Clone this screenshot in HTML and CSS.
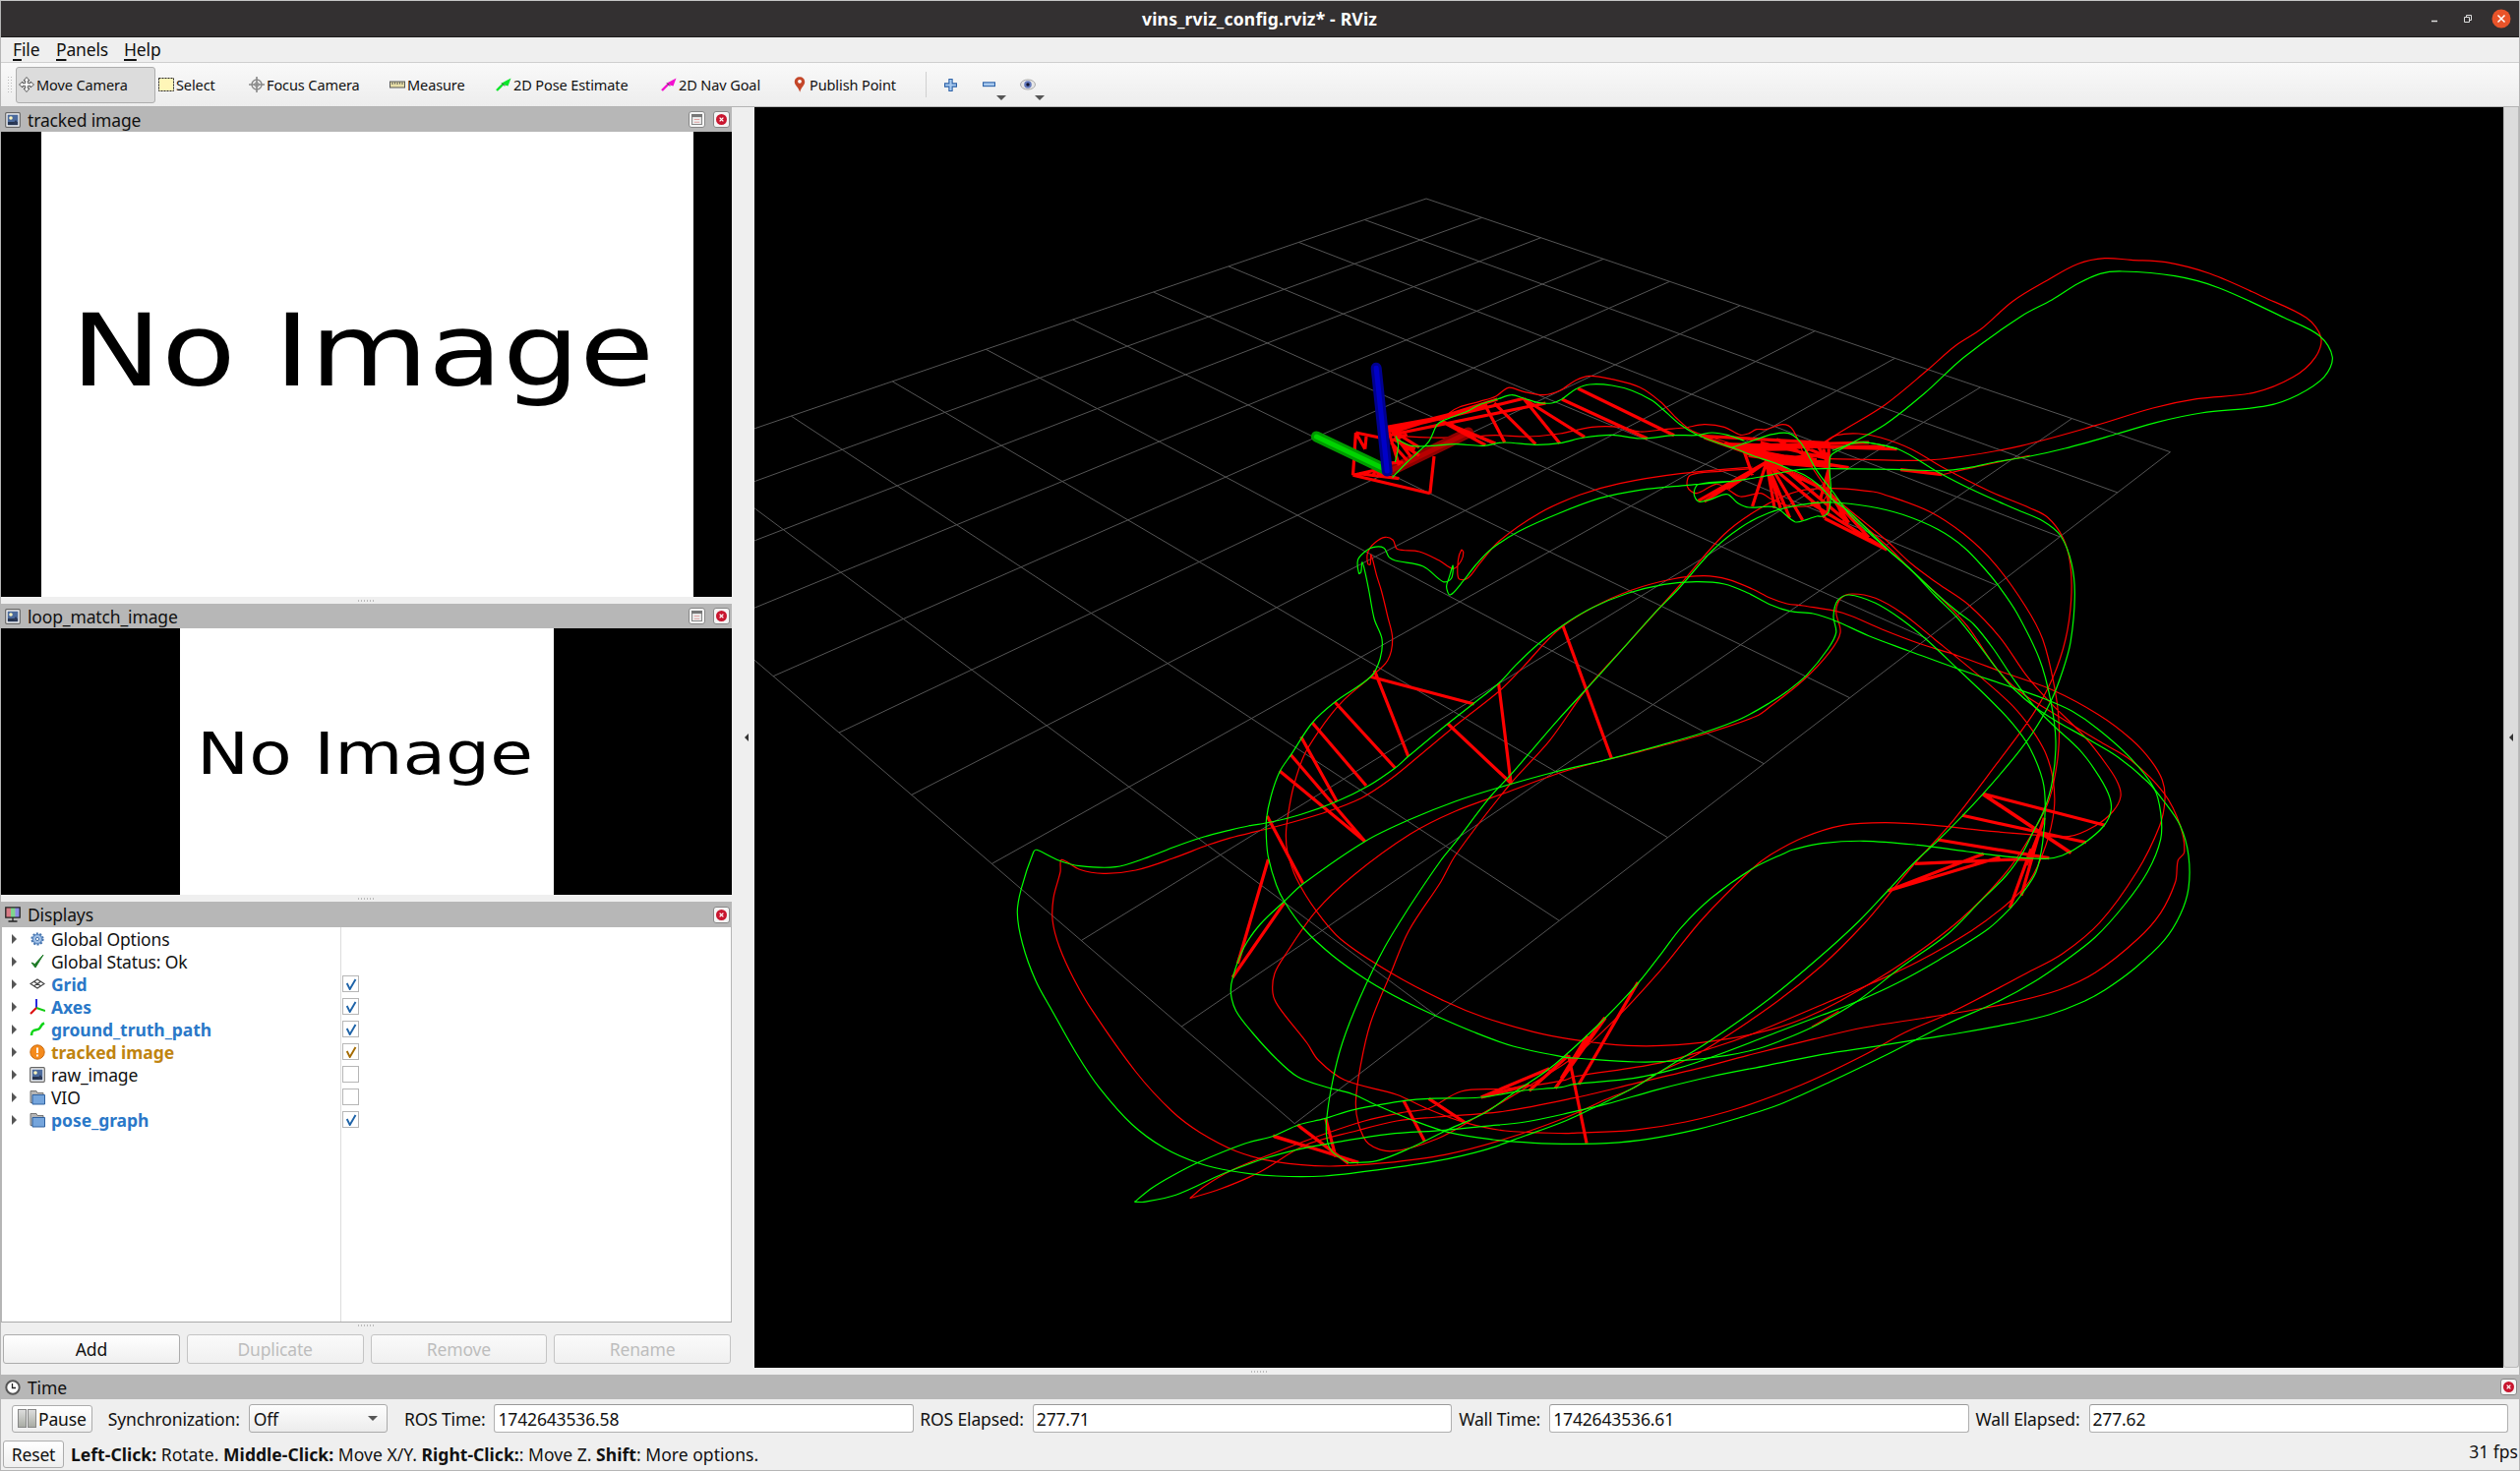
FILE: index.html
```html
<!DOCTYPE html>
<html lang="en">
<head>
<meta charset="utf-8">
<title>vins_rviz_config.rviz* - RViz</title>
<link rel="stylesheet" href="styles.css">
</head>
<body>
<svg class="defs" aria-hidden="true">
  <defs>
    <symbol id="i-move" viewBox="0 0 16 16"><path d="M8 .5 11 4H9.300v2.700H12V5l3.500 3-3.500 3V9.300H9.300V12H11l-3 3.500L5 12h1.700V9.300H4V11L.5 8 4 5v1.700h2.700V4H5z" fill="#fff" stroke="#333" stroke-width=".8"/></symbol>
    <symbol id="i-select" viewBox="0 0 16 14"><rect x=".5" y=".5" width="15" height="13" fill="#fff6b8" stroke="#222" stroke-dasharray="2 1"/></symbol>
    <symbol id="i-focus" viewBox="0 0 16 16"><g fill="none" stroke="#888"><circle cx="8" cy="8" r="5" stroke-width="1.400"/><circle cx="8" cy="8" r="2.300"/><path d="M8 0v16M0 8h16" stroke-width="1.600"/></g></symbol>
    <symbol id="i-measure" viewBox="0 0 16 7"><rect x=".5" y=".5" width="15" height="6" fill="#e9dfa8" stroke="#555"/><path d="M3 1v2.500M5.500 1v2M8 1v2.500M10.500 1v2M13 1v2.500" stroke="#555"/></symbol>
    <symbol id="i-arrow" viewBox="0 0 16 14"><path d="M1 13 7 7" stroke="currentColor" stroke-width="2.400"/><path d="M15.500 .5 12.500 8.500 7 7 6 5.500z" fill="currentColor"/><path d="M6 5.500 9 8.500" stroke="#333"/></symbol>
    <symbol id="i-pin" viewBox="0 0 12 16"><path d="M6 .3c3 0 5.200 2 5.200 5 0 3.500-3.700 5.400-5 10.400C5 10.700.8 8.800.8 5.300c0-3 2.200-5 5.200-5z" fill="#c4472a"/><circle cx="6" cy="4.800" r="1.900" fill="#fff"/></symbol>
    <symbol id="i-plus" viewBox="0 0 12 12"><path d="M4.500.5h3v4h4v3h-4v4h-3v-4h-4v-3h4z" fill="#a9cbf0" stroke="#2d62a8"/></symbol>
    <symbol id="i-minus" viewBox="0 0 12 5"><rect x=".5" y=".5" width="11" height="3.500" fill="#a9cbf0" stroke="#2d62a8"/></symbol>
    <symbol id="i-eye" viewBox="0 0 16 12"><ellipse cx="8" cy="6" rx="7.500" ry="5" fill="#e6e6e6" stroke="#aaa"/><circle cx="8" cy="6" r="3.800" fill="#6379bd"/><circle cx="8" cy="6" r="1.700" fill="#10142e"/></symbol>
    <symbol id="i-image" viewBox="0 0 16 16"><rect x=".7" y=".7" width="14.600" height="14.600" rx="1" fill="#f3f3f3" stroke="#666" stroke-width="1.200"/><rect x="2.700" y="2.700" width="10.600" height="10.600" fill="#4b6a9c"/><path d="M3 10h10v3H3z" fill="#26344f"/><circle cx="6" cy="6" r="1.800" fill="#fff7c0"/><path d="m8 12 3-4 2 3v2z" fill="#2c3a58"/></symbol>
    <symbol id="i-monitor" viewBox="0 0 16 16"><path d="M1 1h5v10H1z" fill="#d77b85"/><path d="M6 1h4.500v10H6z" fill="#7fd48d"/><path d="M10.500 1H15v10h-4.500z" fill="#8a8be6"/><path d="M.8.8h14.400v10.400H.8zM8 11v3.500M3.500 15h9" fill="none" stroke="#222" stroke-width="1.300"/></symbol>
    <symbol id="i-clock" viewBox="0 0 16 16"><circle cx="8" cy="8" r="6.700" fill="#fff" stroke="#555" stroke-width="2"/><path d="M7.500 4v4.500H11" fill="none" stroke="#222" stroke-width="1.300"/></symbol>
    <symbol id="i-gear" viewBox="0 0 16 16"><circle cx="8" cy="8" r="5.500" fill="#8fb2dd" stroke="#4674ae" stroke-width="2.200" stroke-dasharray="1.900 1.550"/><circle cx="8" cy="8" r="4.500" fill="#a3c1e6" stroke="#5d8ac2"/><circle cx="8" cy="8" r="1.600" fill="#fff" stroke="#4674ae"/></symbol>
    <symbol id="i-ok" viewBox="0 0 16 16"><path d="m2 9 4 5 8-13-8.500 9.500z" fill="#1d7a26" stroke="#1d7a26"/></symbol>
    <symbol id="i-grid" viewBox="0 0 16 16"><path d="m8 3 7 4.500L8 12 1 7.500zM4.500 5.200l7 4.600M11.500 5.200l-7 4.600" fill="none" stroke="#444" stroke-width="1.200"/></symbol>
    <symbol id="i-axes" viewBox="0 0 16 16"><path d="M7 9V0" stroke="#11d" stroke-width="1.800"/><path d="m7 9 9 3" stroke="#1c1" stroke-width="2"/><path d="m7 9-6 6" stroke="#d11" stroke-width="2.200"/></symbol>
    <symbol id="i-path" viewBox="0 0 16 16"><path d="M2 14C2 7 7 9 9.500 7.500 12 6 11 3 15 1.500" fill="none" stroke="#0cd416" stroke-width="2.600"/></symbol>
    <symbol id="i-warn" viewBox="0 0 16 16"><circle cx="8" cy="8" r="7.200" fill="#f58a1c" stroke="#c96a10"/><path d="M8 3.500v5.500M8 10.500v2" stroke="#fff" stroke-width="2"/></symbol>
    <symbol id="i-folder" viewBox="0 0 16 16"><path d="M1 1.500h6l1 2h6v10H1z" fill="#b5b5b5" stroke="#777"/><path d="M3 5.500h12.500V15H3z" fill="#75a5dc" stroke="#2f619f"/></symbol>
    <symbol id="i-close" viewBox="0 0 10 10"><circle cx="5" cy="5" r="5" fill="#c9162f"/><path d="m3.300 3.300 3.400 3.400M6.700 3.300 3.300 6.700" stroke="#fff" stroke-width="1.200"/></symbol>
    <symbol id="i-float" viewBox="0 0 10 10"><path d="M.5.500h9v9h-9z" fill="#eee" stroke="#888"/><path d="M0 0h10v2.800H0z" fill="#777"/><path d="M2.500 5h5M2.500 7.500h5" stroke="#e0a0a0"/></symbol>
    <symbol id="i-check" viewBox="0 0 12 12"><path d="m1.700 5 3 6 5.800-10" fill="none" stroke="currentColor" stroke-width="1.900"/></symbol>
  </defs>
</svg>
<div class="window">
  <header class="titlebar">
    <span class="title">vins_rviz_config.rviz* - RViz</span>
    <div class="controls">
      <svg width="12" height="12"><path d="M3 8.500h6" stroke="#ddd" stroke-width="1.500"/></svg>
      <svg width="12" height="12"><path d="M2.500 4.500h5v5h-5zM4.500 4V2.500h5v5H8" fill="none" stroke="#ddd"/></svg>
      <svg width="20" height="20"><circle cx="10" cy="10" r="9.500" fill="#e9542a"/><path d="m6.500 6.500 7 7M13.500 6.500l-7 7" stroke="#fff" stroke-width="1.500"/></svg>
    </div>
  </header>
  <nav class="menubar"><span class="m1"><u>F</u>ile</span><span class="m2"><u>P</u>anels</span><span class="m3"><u>H</u>elp</span></nav>
  <div class="toolbar">
    <i class="grip"></i>
    <div class="tool active w-move"><svg class="ic"><use href="#i-move"/></svg>Move Camera</div>
    <div class="tool w-select"><svg class="ic"><use href="#i-select"/></svg>Select</div>
    <div class="tool w-focus"><svg class="ic"><use href="#i-focus"/></svg>Focus Camera</div>
    <div class="tool w-measure"><svg class="ic"><use href="#i-measure"/></svg>Measure</div>
    <div class="tool w-pose"><svg class="ic lime"><use href="#i-arrow"/></svg>2D Pose Estimate</div>
    <div class="tool w-nav"><svg class="ic pink"><use href="#i-arrow"/></svg>2D Nav Goal</div>
    <div class="tool w-point"><svg class="ic"><use href="#i-pin"/></svg>Publish Point</div>
    <i class="vsep"></i>
    <div class="mini"><svg width="13" height="13"><use href="#i-plus"/></svg></div>
    <div class="mini"><svg width="13" height="6"><use href="#i-minus"/></svg><i class="drop"></i></div>
    <div class="mini"><svg width="16" height="12"><use href="#i-eye"/></svg><i class="drop"></i></div>
  </div>
  <main class="work">
    <aside class="docks">
      <section class="dock">
        <h2 class="dock-title"><svg class="ic"><use href="#i-image"/></svg><span>tracked image</span><b class="tb"><svg><use href="#i-float"/></svg></b><b class="tb"><svg><use href="#i-close"/></svg></b></h2>
        <div class="camera cam-a"><svg width="663" height="473"><rect width="663" height="473" fill="#fff"/><text x="30" y="258" font-size="102" textLength="593" lengthAdjust="spacingAndGlyphs">No Image</text></svg></div>
      </section>
      <div class="split"><i class="dots"></i></div>
      <section class="dock">
        <h2 class="dock-title"><svg class="ic"><use href="#i-image"/></svg><span>loop_match_image</span><b class="tb"><svg><use href="#i-float"/></svg></b><b class="tb"><svg><use href="#i-close"/></svg></b></h2>
        <div class="camera cam-b"><svg width="380" height="271"><rect width="380" height="271" fill="#fff"/><text x="17" y="148" font-size="58" textLength="342" lengthAdjust="spacingAndGlyphs">No Image</text></svg></div>
      </section>
      <div class="split"><i class="dots"></i></div>
      <section class="dock">
        <h2 class="dock-title tall"><svg class="ic"><use href="#i-monitor"/></svg><span>Displays</span><b class="tb"><svg><use href="#i-close"/></svg></b></h2>
        <ul class="tree">
          <li><i class="exp"></i><svg class="ic"><use href="#i-gear"/></svg><span>Global Options</span></li>
          <li><i class="exp"></i><svg class="ic"><use href="#i-ok"/></svg><span>Global Status: Ok</span></li>
          <li class="on"><i class="exp"></i><svg class="ic"><use href="#i-grid"/></svg><span>Grid</span><b class="cb"><svg><use href="#i-check"/></svg></b></li>
          <li class="on"><i class="exp"></i><svg class="ic"><use href="#i-axes"/></svg><span>Axes</span><b class="cb"><svg><use href="#i-check"/></svg></b></li>
          <li class="on"><i class="exp"></i><svg class="ic"><use href="#i-path"/></svg><span>ground_truth_path</span><b class="cb"><svg><use href="#i-check"/></svg></b></li>
          <li class="on warn"><i class="exp"></i><svg class="ic"><use href="#i-warn"/></svg><span>tracked image</span><b class="cb"><svg><use href="#i-check"/></svg></b></li>
          <li><i class="exp"></i><svg class="ic"><use href="#i-image"/></svg><span>raw_image</span><b class="cb"></b></li>
          <li><i class="exp"></i><svg class="ic"><use href="#i-folder"/></svg><span>VIO</span><b class="cb"></b></li>
          <li class="on"><i class="exp"></i><svg class="ic"><use href="#i-folder"/></svg><span>pose_graph</span><b class="cb"><svg><use href="#i-check"/></svg></b></li>
        </ul>
        <div class="split thin"><i class="dots"></i></div>
        <div class="actions"><button>Add</button><button disabled>Duplicate</button><button disabled>Remove</button><button disabled>Rename</button></div>
      </section>
    </aside>
    <div class="collapse left"><i></i></div>
    <svg class="scene" id="scene" width="1778" height="1282" viewBox="767 109 1778 1282"></svg>
    <div class="collapse right"><i></i></div>
  </main>
  <div class="split wide"><i class="dots"></i></div>
  <h2 class="dock-title time-title"><svg class="ic"><use href="#i-clock"/></svg><span>Time</span><b class="tb"><svg><use href="#i-close"/></svg></b></h2>
  <div class="timebar">
    <button class="pause"><i></i><i></i>Pause</button>
    <label class="l-sync">Synchronization:</label><div class="combo">Off<i class="drop"></i></div>
    <label class="l-ros">ROS Time:</label><div class="field">1742643536.58</div>
    <label class="l-rel">ROS Elapsed:</label><div class="field">277.71</div>
    <label class="l-wall">Wall Time:</label><div class="field">1742643536.61</div>
    <label class="l-wel">Wall Elapsed:</label><div class="field">277.62</div>
  </div>
  <footer class="status"><button class="reset">Reset</button><p><b>Left-Click:</b> Rotate. <b>Middle-Click:</b> Move X/Y. <b>Right-Click:</b>: Move Z. <b>Shift</b>: More options.</p><span class="fps">31 fps</span></footer>
</div>
<script src="scene.js"></script>
</body>
</html>
```
FILE: styles.css
```css
* { box-sizing: border-box; }
body { margin: 0; background: #efefef; font-family: "Noto Sans", "Open Sans", sans-serif; font-size: 17.5px; letter-spacing: -0.15px; color: #111; }
.defs { position: absolute; width: 0; height: 0; }
i { font-style: normal; }
button { font: inherit; letter-spacing: inherit; color: inherit; padding: 0; }
.window { width: 2562px; height: 1496px; display: flex; flex-direction: column; border-left: 1px solid #b5b5b5; border-right: 1px solid #b5b5b5; border-top: 1px solid #c6c6c6; border-bottom: 1px solid #b5b5b5; overflow: hidden; white-space: nowrap; }
.titlebar { flex: none; height: 37px; background: #333031; border-bottom: 1px solid #1c1b1b; display: flex; align-items: center; padding-left: 1160px; color: #fff; font-weight: 700; font-size: 17.5px; letter-spacing: 0.2px; }
.title { flex: 1; }
.controls { display: flex; align-items: center; gap: 22px; padding-right: 8px; }
.controls svg:last-child { margin-left: -4px; }
.menubar { flex: none; height: 26px; border-bottom: 1px solid #cfcfcf; display: flex; align-items: center; padding: 0 0 2px 12px; }
.menubar u { text-decoration-thickness: 2px; text-underline-offset: 3px; }
.m1 { width: 44px; } .m2 { width: 69px; } .m3 { width: 60px; }
.toolbar { flex: none; height: 45px; background: linear-gradient(#f9f9f9, #ededed); border-bottom: 1px solid #b4b4b4; display: flex; align-items: center; font-size: 14.5px; letter-spacing: -0.1px; }
.grip { width: 5px; height: 18px; margin: 0 4px 0 6px; background: radial-gradient(circle, #bbb 0.8px, transparent 1px) 0 0 / 3px 3px; }
.tool { display: flex; align-items: center; gap: 2px; height: 37px; padding-left: 3px; }
.tool .ic { width: 16px; height: 16px; flex: none; }
.active { background: #dcdcdc; border: 1px solid #adadad; border-radius: 3px; padding-left: 2px; }
.w-move { width: 142px; } .w-select { width: 92px; } .w-focus { width: 143px; } .w-measure { width: 108px; } .w-pose { width: 168px; } .w-nav { width: 133px; } .w-point { width: 139px; }
.lime { color: #0ee52c; } .pink { color: #f310cf; }
.vsep { width: 1px; height: 26px; background: #d0d0d0; }
.mini { width: 39px; height: 37px; display: flex; align-items: center; justify-content: center; position: relative; left: 5px; }
.drop { border: 5px solid transparent; border-top-color: #555; border-bottom: 0; }
.mini .drop { position: absolute; left: 27px; bottom: 3px; }
.work { flex: none; height: 1282px; display: flex; }
.docks { flex: none; width: 743px; display: flex; flex-direction: column; }
.dock-title { flex: none; margin: 0; height: 25px; background: #b7b7b7; display: flex; align-items: center; font-size: 17.5px; font-weight: 400; padding: 0 2px 0 4px; gap: 7px; }
.dock-title.tall { height: 26px; }
.dock-title .ic { width: 16px; height: 16px; }
.dock-title span { flex: 1; }
.tb { width: 17px; height: 17px; background: #f5f5f5; border: 1px solid #888; border-radius: 3px; display: flex; align-items: center; justify-content: center; }
.tb + .tb { margin-left: 1px; }
.tb svg { width: 11px; height: 11px; }
.camera { background: #000; display: flex; }
.camera svg { display: block; font-family: "DejaVu Sans", sans-serif; letter-spacing: 0; }
.cam-a { height: 473px; padding-left: 41px; }
.cam-b { height: 271px; padding-left: 182px; }
.split { flex: none; height: 7px; display: flex; align-items: center; justify-content: center; }
.split.thin { height: 12px; align-items: flex-start; padding-top: 2px; }
.dots { width: 18px; height: 2px; background: repeating-linear-gradient(90deg, #bbb 0 1px, transparent 1px 3px); }
.tree { margin: 0; padding: 0; list-style: none; height: 402px; background: linear-gradient(90deg, #fff 344px, #dcdcdc 344px 345px, #fff 345px); border-left: 1px solid #b5b5b5; border-bottom: 1px solid #aaa; border-right: 1px solid #b5b5b5; }
.tree li { height: 23px; display: flex; align-items: center; }
.exp { border: 5px solid transparent; border-left-color: #555; border-right: 0; margin: 0 13px 0 10px; }
.tree .ic { width: 16px; height: 16px; flex: none; }
.tree span { width: 302px; padding-left: 6px; flex: none; }
.on { color: #2a78c8; }
.on span { font-weight: 700; font-size: 17.5px; letter-spacing: -0.05px; }
.warn { color: #c08410; }
.cb { width: 17px; height: 17px; background: #fff; border: 1px solid #b6b6b6; display: flex; align-items: center; justify-content: center; color: #1e63a8; }
.warn .cb { color: #a56b00; }
.cb svg { width: 12px; height: 12px; }
.actions { display: flex; gap: 7px; padding: 0 1px 0 2px; }
button { background: linear-gradient(#fff, #efefef); border: 1px solid #acacac; border-radius: 3px; }
.actions button { flex: 1; height: 30px; }
button:disabled { color: #bdbdbd; border-color: #c4c4c4; background: linear-gradient(#fafafa, #f0f0f0); }
.collapse { flex: none; display: flex; align-items: center; justify-content: center; }
.collapse.left { width: 23px; padding-left: 7px; }
.collapse.right { width: 16px; background: #dcdcdc; border: 1px solid #bbb; border-top: 0; border-radius: 0 0 3px 3px; }
.collapse i { border: 4px solid transparent; border-right-color: #333; border-left: 0; }
.scene { display: block; background: #000; flex: none; }
.timebar { flex: none; height: 39px; display: flex; align-items: center; padding: 0 11px; }
.timebar label { text-align: right; padding-right: 9px; }
.pause { width: 82px; height: 28px; display: flex; align-items: center; padding-left: 5px; gap: 1px; }
.pause i { width: 9px; height: 19px; background: linear-gradient(#ddd, #a9aca4); border: 1px solid #888; }
.pause i + i { margin-right: 1px; }
.l-sync { width: 159px; } .l-ros { width: 109px; } .l-rel { width: 121px; } .l-wall { width: 99px; } .l-wel { width: 122px; }
.combo { width: 141px; height: 29px; background: linear-gradient(#fdfdfd, #ececec); border: 1px solid #aaa; border-radius: 3px; display: flex; align-items: center; justify-content: space-between; padding: 0 9px 0 4px; }
.field { width: 427px; height: 29px; background: #fff; border: 1px solid #b0b0b0; border-top-color: #999; border-radius: 3px; display: flex; align-items: center; padding-left: 3px; }
.status { flex: 1; display: flex; align-items: center; padding: 2px 1px 1px 2px; }
.reset { width: 62px; height: 28px; }
.status p { margin: 0 0 0 7px; flex: 1; letter-spacing: 0.04px; }
.fps { padding-bottom: 6px; letter-spacing: 0; }
/* 3D view strokes */
.grid { stroke: #555; stroke-width: 1; fill: none; }
.est { stroke: #f00; stroke-width: 1.2; fill: none; }
.truth { stroke: #0f0; stroke-width: 1.2; fill: none; }
.loop { stroke: #f00; stroke-width: 3.2; fill: none; }
```
FILE: scene.js
```js
// 3D view: ground grid, trajectories (per-tile survey points) and loop-closure edges.
const svg = document.getElementById('scene');
const tile = (x, y, sx) => p => [x + p[0] / sx, y + p[1] / 3];
const T = {
  F: tile(1300, 340, 2.45), G: tile(1250, 600, 2.6133), H: tile(1720, 240, 2.24),
  I: tile(1800, 580, 3), J: tile(1020, 840, 2.45), K: tile(1600, 780, 2.3758)
};
function add(tag, attrs) {
  const el = document.createElementNS('http://www.w3.org/2000/svg', tag);
  for (const k in attrs) el.setAttribute(k, attrs[k]);
  svg.appendChild(el);
}
// "F 1,2 3,4 H 5,6": a letter picks the tile for the points after it
function points(text) {
  let t = null; const out = [];
  for (const w of text.trim().split(/\s+/)) {
    if (T[w]) t = T[w]; else out.push(t(w.split(',').map(Number)));
  }
  return out;
}
const f = n => n.toFixed(1);
function curve(cls, text) {
  const p = points(text);
  let d = `M${f(p[0][0])} ${f(p[0][1])}`;
  for (let i = 0; i < p.length - 1; i++) {
    const a = p[i - 1] || p[i], b = p[i], c = p[i + 1], e = p[i + 2] || c;
    const len = Math.hypot(c[0] - b[0], c[1] - b[1]);
    const la = Math.hypot(b[0] - a[0], b[1] - a[1]) || len, le = Math.hypot(e[0] - c[0], e[1] - c[1]) || len;
    const k1 = len / (len + la) / 3, k2 = len / (len + le) / 3;
    d += `C${f(b[0] + (c[0] - a[0]) * k1)} ${f(b[1] + (c[1] - a[1]) * k1)} ${f(c[0] - (e[0] - b[0]) * k2)} ${f(c[1] - (e[1] - b[1]) * k2)} ${f(c[0])} ${f(c[1])}`;
  }
  add('path', { class: cls, d });
}
function edges(text) {
  const p = points(text);
  let d = '';
  for (let i = 0; i < p.length; i += 2) d += `M${f(p[i][0])} ${f(p[i][1])}L${f(p[i + 1][0])} ${f(p[i + 1][1])}`;
  add('path', { class: 'loop', d });
}
// 10 x 10 ground plane in perspective
const proj = (u, v) => {
  const w = 1 - 0.02706 * u - 0.03082 * v;
  return f((15.94 * u - 105.5 * v + 1450) / w) + ' ' + f((13.33 * u + 14.6 * v + 202) / w);
};
let g = '';
for (let k = 0; k <= 10; k++) g += `M${proj(k, 0)}L${proj(k, 10)}M${proj(0, k)}L${proj(10, k)}`;
add('path', { class: 'grid', d: g });

const est = [
  'F 400,275 425,240 450,222 500,205 540,190 572,163 610,175 660,185 700,172 740,140 775,127 830,137 900,162 950,205 990,255 1030,295 1080,315 1140,340 1215,385 1300,430 1370,480 H 340,815 440,925 500,1000 560,1060 630,1125 I 700,205 780,320 850,400 960,510 1030,600 1060,650 1068,690 1045,735 990,780 910,812 780,805 640,793 500,778 350,770 220,778 100,815 0,868 K 430,312 310,465 210,620 100,770 0,885 J 1300,800 1190,880 1080,955 970,992 910,970 885,910 878,840 890,730 915,600 965,450 1010,320 1090,170 G 600,810 740,600 850,460 950,300 1060,160 1185,0 F 1110,610 1200,530 1290,480 1380,470 1480,480 H 430,785 540,840 620,910 690,1000 760,1130 I 830,210 865,350 880,470 875,580 850,700 800,800 720,920 580,1065 400,1200 205,1318 K 560,765 480,800 370,830 250,848 130,850 0,832 J 1320,628 1200,585 1100,535 965,448 840,345 780,260 730,160 708,80 G 150,745 155,690 170,600 200,500 250,410 300,340 375,265 420,215 433,150 420,80 403,0 F 245,740 230,672 228,702 222,700 222,665 240,635 265,619 285,628 295,655 350,663 400,690 435,715 455,690 460,665 455,658 447,690 448,745 470,745 500,700 550,630 650,545 750,490 850,455 1000,425 1180,405',
  'F 1240,400 1310,440 H 330,815 440,940 I 430,0 520,85 600,170 690,300 760,370 870,440 1000,520 1100,580 1200,680 1250,780 1262,860 1243,885 1235,950 1190,1045 1120,1125 990,1228 880,1280 740,1318 K 980,738 850,765 700,795 580,830 420,880 300,920 150,965 0,1010 J 1250,870 1080,888 980,900 880,930 750,975 640,1055 540,1108 465,1136',
  'J 465,1136 500,1100 570,1050 680,995 800,940 900,900 1000,873 1060,862 1140,810 1240,802 1300,795 1400,775 K 0,945 200,905 340,855 430,815 600,725 720,660 830,595 960,500 1040,425 1100,350 1140,240 I 865,730 862,640 840,560 800,490 740,415 640,325 500,210 400,130 320,85 250,72 215,85 200,125 213,190 180,250 100,335 0,415 G 1400,385 1260,440 1100,490 900,550 730,620 600,675 480,745 330,870 230,980 150,1110 120,1170 115,1230 J 685,550 757,663 785,715 850,775 980,820 1060,865 1150,905 1250,930 1400,938 K 0,1117 143,1108 270,1083 400,1040 550,970 700,880 800,810 910,750 1100,625 1180,570 1270,475 1360,320 1415,180 I 1203,700 1195,640 1160,580 1100,515 1000,440 860,365 720,315 570,260 450,222 340,180 220,130 100,108 50,102 0,85 F 1180,777 1120,748 1060,737 980,747 880,780 780,835 G 870,125 780,235 720,305 610,405 510,500 430,575 350,635 250,680 130,720 0,757 J 510,58 420,100 330,135 250,145 190,133 145,103 142,140 125,220 123,290 140,370 175,465 220,560 330,750 420,870 490,935 580,992 680,1025 810,1038 950,1028 1100,1003 1250,955 1400,890 1500,835 K 143,980 200,935 300,875 470,735 600,605 700,480 770,375 820,300 I 560,760 690,590 800,440 860,330 900,210 917,90 H 862,1000 845,920 810,858 770,830 680,780 570,705 500,650 430,615 380,603 330,608 300,630',
  'H 310,680 400,682 520,685 620,672 750,640 920,578 1050,525 1150,497 1280,478 1370,430 1420,370 1433,310 1400,250 1300,185 1180,115 1080,80 1000,73 940,68 880,85 810,135 730,200 660,283 600,335 540,405 440,515 330,605 300,635',
  'F 290,310 380,315 470,313 540,308 620,312 700,303 780,283 850,283 900,297 960,290 1010,285 1060,275 1110,283 1150,307 1170,303 1190,290 1215,290 1255,275 1280,290 1310,370 1370,480',
  'F 1180,410 1100,418 1025,430 1018,465 1040,485 1090,457 1115,470 1150,495 1200,485 1230,505 1280,525 1350,515 1370,480',
  'H 570,728 690,692 770,670', 'K 575,793 640,745'
];
const truth = [
  'F 283,437 320,390 345,362 375,325 395,275 412,262 470,235 500,215 545,198 580,185 610,195 645,208 680,210 705,198 740,167 775,153 830,156 880,172 930,202 965,238 1000,275 1040,305 1090,330 1140,350 1180,370 1230,390 1270,410 1310,430 1345,460 1380,505 1420,540 1470,600 1520,660 I 430,0 500,75 570,145 630,220 690,300 740,360 810,420 880,465 960,510 1060,570 1150,645 1200,705 1250,780 1275,870 1275,970 1250,1050 1200,1130 1110,1215 1020,1280 950,1318 K 1150,755 1060,782 940,810 840,830 740,850 600,877 470,910 330,945 200,985 80,1028 0,1052 J 1300,903 1200,916 1100,928 960,940 820,967 730,988 650,1015 550,1060 430,1126 350,1147 327,1147',
  'J 327,1147 370,1105 420,1068 485,1027 600,970 675,945 735,912 800,893 865,868 930,852 1000,838 1060,832 1190,828 1290,808 1390,797 K 0,968 143,950 250,920 340,882 500,805 600,757 680,718 780,660 880,590 1000,495 1055,430 I 765,990 810,920 830,830 838,720 830,640 790,540 740,470 670,395 570,300 480,215 400,150 320,100 240,75 205,92 192,140 200,190 175,240 110,320 50,370 0,403 G 1360,392 1260,435 1150,472 1015,514 865,555 715,603 600,645 480,700 360,767 195,897 145,950 J 640,300 600,370 572,460 567,510 580,565 620,630 680,710 733,765 800,795 870,818 930,852 1010,893 1110,935 1220,957 1320,967 1421,970 K 80,1148 180,1135 300,1105 400,1070 500,1028 620,960 760,875 900,785 1021,718 I 800,1258 900,1190 990,1120 1080,1020 1150,920 1190,820 1190,740 1170,665 1100,575 1000,485 920,430 830,390 730,355 570,300 420,245 300,200 200,155 130,132 60,125 0,105 F 1170,790 1110,762 1040,755 960,763 870,790 780,835 705,890 G 820,165 760,230 715,285 650,345 580,408 475,508 440,543 370,597 285,645 190,685 110,708 50,720 0,733 J 500,33 430,62 350,100 280,125 190,122 140,106 83,73 75,80 45,190 35,265 48,360 80,470 120,560 185,700 240,800 320,910 400,982 485,1028 570,1053 680,1068 800,1068 940,1048 1080,1022 1200,988 1300,945 1400,900 1470,860 K 150,975 240,905 330,835 475,705 I 150,1180 270,1070 360,975 440,890 510,825 580,755 650,680 740,575 800,495 855,400 890,310 915,220 928,80 H 865,1000 840,915 800,870 740,835 640,775 560,720 470,650 390,628',
  'J 862,1028 930,1022 1010,985 1110,925 1200,875 1270,815 1350,750 1400,700 1500,585 G 1085,1200 1150,1105 1200,1030 1280,940 1390,850 1480,800 K 530,252 600,233 700,226 830,238 950,258 1060,275 1140,280 1180,270 1230,235 1280,180 1298,130 I 1030,680 990,610 940,545 870,480 800,410 740,330 680,240 620,165 575,130 510,75 430,0 F 1430,560 1380,480 1340,415 1300,330 1270,302 1230,305 1180,325 1130,345',
  'J 862,1028 820,995 807,960 805,900 820,780 845,660 890,520 950,370 1010,250 1090,105 G 600,770 690,635 750,560 870,400 990,250 1060,160 1130,70 1190,0 F 1080,660 1150,590 1220,545 1300,520 1380,513 1470,525 H 480,850 560,895 620,950 670,1020 700,1070 740,1150 I 820,270 855,400 870,520 860,640 835,730 800,800 770,860 720,930 640,1010 540,1110 400,1210 260,1318 K 590,785 520,825 450,858 370,880 260,896 150,900 0,888 J 1400,706 1270,672 1170,628 1075,578 1000,535 910,473 820,395 750,315 700,230 680,180 660,95 G 98,760 98,700 110,630 133,555 165,500 220,405 280,342 375,265 400,210 405,150 385,90 370,0 F 215,725 208,695 205,725 200,730 197,690 210,668 235,650 262,652 275,680 290,690 360,708 410,755 430,745 434,705 425,740 418,770 427,795 460,752 490,705 530,655 600,600 700,545 800,500 900,475 1020,460 1130,448 1200,435 1260,420 1300,412 1370,410 H 460,712 570,716 630,707 690,690 770,672 850,648 970,603 1060,568 1160,540 1310,518 1380,485 1440,430 1459,370 1430,305 1350,250 1200,158 1100,122 980,108 930,115 880,145 820,195 750,245 620,370 530,480 440,575 340,650 315,675 317,780 312,840 300,855 285,855 262,865 235,872 190,828 130,828 105,815 80,788 40,805 15,810 5,785 15,758 100,748',
  'F 295,320 330,340 380,340 440,335 510,340 560,330 640,337 700,332 760,315 830,307 900,318 985,308 1040,308 1080,300 1120,308 1160,325',
  'F 290,390 298,340 292,310', 'H 320,655 370,632 400,630 470,650'
];
est.forEach(t => curve('est', t));

// fixed-frame axes
function bar(a, b, color, hi) {
  const [p, q] = points(`F ${a} ${b}`);
  const at = { x1: p[0], y1: p[1], x2: q[0], y2: q[1] };
  add('line', { ...at, stroke: color, 'stroke-width': 11, 'stroke-linecap': 'round' });
  add('line', { ...at, stroke: hi, 'stroke-width': 5, 'stroke-linecap': 'round' });
}
bar('472,300', '285,412', '#8f0000', '#b80000');

edges('G 375,265 650,348 385,245 475,508 280,342 440,543 220,405 363,597 190,448 285,645 163,503 360,767 133,552 360,767 100,690 195,895 103,822 22,1140 145,955 8,1182 580,408 750,592 715,285 748,592 885,107 1015,514');
edges('J 672,945 885,1027 675,948 830,1005 733,912 860,1030 738,917 830,1003 803,893 828,1010 997,838 1050,963 1060,832 1150,905 1190,828 1360,740 1190,828 1310,790 1310,808 1408,700 1375,800 1500,585 1408,700 1453,968 1390,770 1455,640');
edges('K 12,968 155,657 0,890 75,765');
edges('I 648,682 1020,778 648,682 917,862 648,684 915,862 585,748 963,830 510,822 850,878 440,895 800,880 358,978 650,865 358,978 700,875 820,800 765,992 835,755 820,800 795,850 730,1030 820,800 780,900');
edges('F 192,300 185,430 185,430 377,485 377,485 387,372 192,300 272,320 192,300 215,350 215,350 218,312 185,430 250,412 250,390 235,432 270,283 405,253 275,290 520,215 270,296 610,196 285,305 665,210 280,300 545,198 405,265 540,333 405,265 515,338 430,275 490,320 515,218 563,330 537,210 640,335 610,196 700,332 612,198 762,313 705,198 918,318 745,165 985,308 270,283 350,345 285,300 330,375 300,330 350,370 280,330 320,385 275,300 300,400 285,320 340,350 200,425 300,440 250,395 310,390 240,418 260,430 270,310 310,300 280,325 320,305');
edges('F 1215,390 1045,508 1215,390 1060,510 1215,390 1080,485 1215,390 1120,470 1215,390 1180,525 1215,390 1235,530 1215,390 1250,530 1215,390 1273,560 1225,400 1305,567 1215,390 1340,520 1215,390 1370,480 1240,390 1420,575 1050,310 1370,332 1060,315 1220,385 1110,335 1540,350 1130,345 1510,342 1150,340 1470,330 1160,350 1370,400 1170,370 1370,405 1200,330 1370,380 1240,320 1370,410 1355,340 1370,410 1370,330 1370,405 1180,360 1420,407 1160,360 1180,430 1300,340 1370,375 1370,410 1350,500 1370,410 1368,540 1340,510 1360,560 1325,515 1515,657 1360,562 1515,657 1370,480 1420,575 1380,500 1470,620 1385,500 1410,570');
edges('F 1160,345 1370,340 1170,352 1290,350 1210,385 1370,400 1215,378 1370,390 1200,372 1300,390 1215,390 1330,402 1250,380 1370,365 1130,342 1260,372 1340,335 1365,385 1175,360 1225,372 1320,345 1300,390 1150,348 1240,386 1215,340 1300,345 1230,368 1340,382 1345,400 1370,384');
edges('H 475,713 570,728');
truth.forEach(t => curve('truth', t));
bar('94,312', '265,412', '#009a00', '#00d400');
bar('243,103', '270,417', '#00008f', '#0000c8');
```
